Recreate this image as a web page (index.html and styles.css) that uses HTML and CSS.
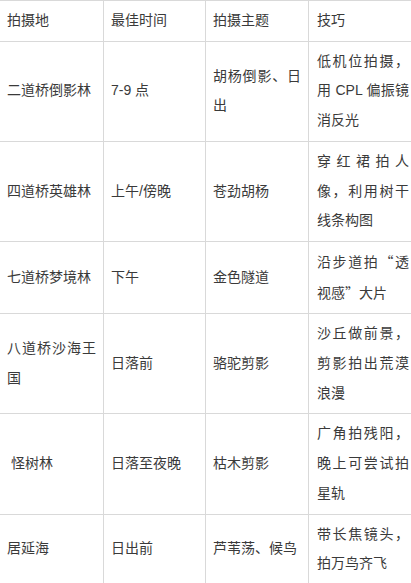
FILE: index.html
```html
<!DOCTYPE html>
<html lang="zh-CN">
<head>
<meta charset="utf-8">
<title>额济纳胡杨林拍摄攻略</title>
<link rel="stylesheet" href="styles.css">
</head>
<body>
<table class="guide">
  <colgroup>
    <col class="c1"><col class="c2"><col class="c3"><col class="c4">
  </colgroup>
  <tbody>
    <tr>
      <td>拍摄地</td><td>最佳时间</td><td>拍摄主题</td><td class="tip">技巧</td>
    </tr>
    <tr>
      <td>二道桥倒影林</td><td>7-9 点</td><td>胡杨倒影、日出</td><td class="tip">低机位拍摄，用 CPL 偏振镜消反光</td>
    </tr>
    <tr>
      <td>四道桥英雄林</td><td>上午/傍晚</td><td>苍劲胡杨</td><td class="tip">穿红裙拍人像，利用树干线条构图</td>
    </tr>
    <tr>
      <td>七道桥梦境林</td><td>下午</td><td>金色隧道</td><td class="tip">沿步道拍<span class="cjk">“</span>透视感<span class="cjk">”</span>大片</td>
    </tr>
    <tr>
      <td>八道桥沙海王国</td><td>日落前</td><td>骆驼剪影</td><td class="tip">沙丘做前景，剪影拍出荒漠浪漫</td>
    </tr>
    <tr>
      <td>&nbsp;怪树林</td><td>日落至夜晚</td><td>枯木剪影</td><td class="tip">广角拍残阳，晚上可尝试拍星轨</td>
    </tr>
    <tr>
      <td>居延海</td><td>日出前</td><td>芦苇荡、候鸟</td><td class="tip">带长焦镜头，拍万鸟齐飞</td>
    </tr>
  </tbody>
</table>
</body>
</html>
```
FILE: styles.css
```css
html, body {
  margin: 0;
  padding: 0;
  background: #ffffff;
  overflow: hidden;
}

.guide {
  border-collapse: collapse;
  table-layout: fixed;
  width: 413px;
  margin-left: -1px;
  font-family: "Liberation Sans", "Noto Sans CJK SC", sans-serif;
  font-size: 14px;
  line-height: 29.7px;
  color: #3a3a3a;
}

.c1 { width: 104px; }
.c2 { width: 102px; }
.c3 { width: 103px; }
.c4 { width: 104px; }

.guide td {
  border: 1px solid #d9d9d9;
  padding: 5px 7px;
  vertical-align: middle;
  text-align: justify;
  word-break: break-all;
}

.guide td.tip {
  padding-left: 8px;
  padding-right: 3px;
}

.cjk {
  font-family: "Noto Sans CJK SC", sans-serif;
}
```
